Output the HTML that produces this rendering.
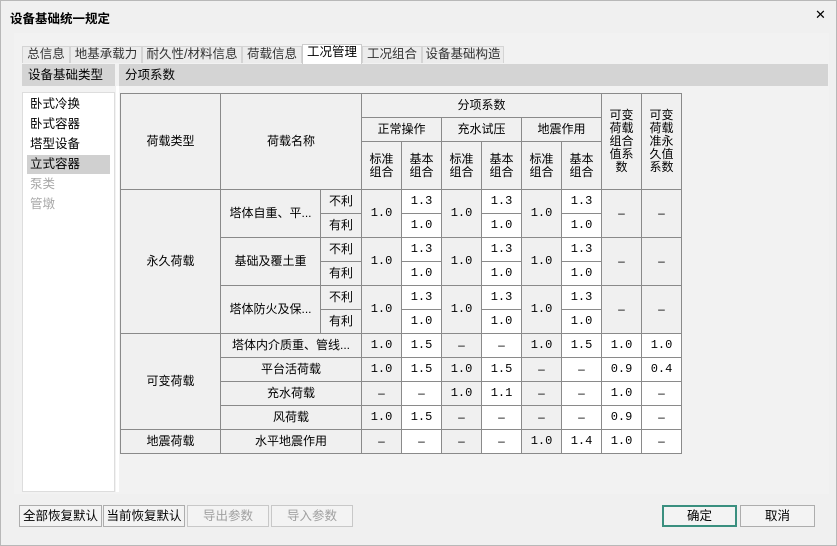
<!DOCTYPE html>
<html><head><meta charset="utf-8"><style>
*{margin:0;padding:0;box-sizing:border-box}
body{width:837px;height:546px;overflow:hidden;background:#f0f0f0;font-family:"Liberation Sans","Noto Sans CJK SC",sans-serif;font-size:12px;color:#000;position:relative}
.a{position:absolute}
#win{left:0;top:0;width:837px;height:546px;border:1px solid #b8b8b8}
.title{left:10px;top:8px;font-size:12.5px;font-weight:bold}
.close{left:815px;top:7px;font-size:13px}
.frame{left:14px;top:33px;width:815px;height:461px;background:#f2f2f2}
.tab{top:46px;height:17px;border:1px solid #d4d4d4;border-bottom:none;background:#ececec;color:#333;text-align:center;line-height:15px;font-size:12.5px}
.tab.act{top:44px;height:20px;background:#fff;border-color:#ccc;color:#000}
.hd{top:64px;height:22px;background:#d4d4d4;line-height:22px;padding-left:6px;font-size:12.5px}
.list{left:22px;top:92px;width:93px;height:400px;background:#fff;border:1px solid #ddd}
.li{left:27px;width:83px;height:19px;line-height:19px;padding-left:3px;font-size:12.5px}
table{position:absolute;left:120px;top:93px;border-collapse:collapse;table-layout:fixed}
td{border:1px solid #8a8a8a;text-align:center;vertical-align:middle;background:#f0f0f0;height:24px;padding:0;font-size:12px;line-height:13px;overflow:hidden;white-space:nowrap}
td.w{background:#fff}
.n{font-family:"Liberation Mono",monospace;font-size:12px}
.d{font-family:"Liberation Sans",sans-serif}
.btn{top:505px;height:22px;border:1px solid #adadad;background:#f3f3f3;text-align:center;line-height:20px;font-size:12.5px}
.dis{color:#a0a0a0;border-color:#c8c8c8}
</style></head><body>
<div id="win" class="a"></div>
<div class="a title">设备基础统一规定</div>
<div class="a close">✕</div>
<div class="a frame"></div>
<div class="a tab" style="left:22px;width:48px">总信息</div>
<div class="a tab" style="left:70px;width:72px">地基承载力</div>
<div class="a tab" style="left:142px;width:100px">耐久性/材料信息</div>
<div class="a tab" style="left:242px;width:60px">荷载信息</div>
<div class="a tab act" style="left:302px;width:60px">工况管理</div>
<div class="a tab" style="left:362px;width:60px">工况组合</div>
<div class="a tab" style="left:422px;width:82px">设备基础构造</div>
<div class="a hd" style="left:22px;width:93px">设备基础类型</div>
<div class="a hd" style="left:119px;width:709px">分项系数</div>
<div class="a list"></div>
<div class="a li" style="top:95px">卧式冷换</div>
<div class="a li" style="top:115px">卧式容器</div>
<div class="a li" style="top:135px">塔型设备</div>
<div class="a li" style="top:155px;background:#d0d0d0">立式容器</div>
<div class="a li" style="top:175px;color:#a8a8a8">泵类</div>
<div class="a li" style="top:195px;color:#a8a8a8">管墩</div>
<div class="a" style="left:116px;top:86px;width:3px;height:406px;background:#fff"></div>
<table>
<colgroup><col style="width:100px"><col style="width:100px"><col style="width:41px"><col style="width:40px"><col style="width:40px"><col style="width:40px"><col style="width:40px"><col style="width:40px"><col style="width:40px"><col style="width:40px"><col style="width:40px"></colgroup>
<tr><td rowspan="3">荷载类型</td><td rowspan="3" colspan="2">荷载名称</td><td colspan="6">分项系数</td><td rowspan="3">可变<br>荷载<br>组合<br>值系<br>数</td><td rowspan="3">可变<br>荷载<br>准永<br>久值<br>系数</td></tr>
<tr><td colspan="2">正常操作</td><td colspan="2">充水试压</td><td colspan="2">地震作用</td></tr>
<tr><td style="height:48px">标准<br>组合</td><td>基本<br>组合</td><td>标准<br>组合</td><td>基本<br>组合</td><td>标准<br>组合</td><td>基本<br>组合</td></tr>
<tr><td rowspan="6">永久荷载</td><td rowspan="2">塔体自重、平...</td><td>不利</td><td rowspan="2" class="n">1.0</td><td class="w n">1.3</td><td rowspan="2" class="n">1.0</td><td class="w n">1.3</td><td rowspan="2" class="n">1.0</td><td class="w n">1.3</td><td rowspan="2" class="d">–</td><td rowspan="2" class="d">–</td></tr>
<tr><td>有利</td><td class="w n">1.0</td><td class="w n">1.0</td><td class="w n">1.0</td></tr>
<tr><td rowspan="2">基础及覆土重</td><td>不利</td><td rowspan="2" class="n">1.0</td><td class="w n">1.3</td><td rowspan="2" class="n">1.0</td><td class="w n">1.3</td><td rowspan="2" class="n">1.0</td><td class="w n">1.3</td><td rowspan="2" class="d">–</td><td rowspan="2" class="d">–</td></tr>
<tr><td>有利</td><td class="w n">1.0</td><td class="w n">1.0</td><td class="w n">1.0</td></tr>
<tr><td rowspan="2">塔体防火及保...</td><td>不利</td><td rowspan="2" class="n">1.0</td><td class="w n">1.3</td><td rowspan="2" class="n">1.0</td><td class="w n">1.3</td><td rowspan="2" class="n">1.0</td><td class="w n">1.3</td><td rowspan="2" class="d">–</td><td rowspan="2" class="d">–</td></tr>
<tr><td>有利</td><td class="w n">1.0</td><td class="w n">1.0</td><td class="w n">1.0</td></tr>
<tr><td rowspan="4">可变荷载</td><td colspan="2">塔体内介质重、管线...</td><td class="n">1.0</td><td class="w n">1.5</td><td class="d">–</td><td class="w d">–</td><td class="n">1.0</td><td class="w n">1.5</td><td class="w n">1.0</td><td class="w n">1.0</td></tr>
<tr><td colspan="2">平台活荷载</td><td class="n">1.0</td><td class="w n">1.5</td><td class="n">1.0</td><td class="w n">1.5</td><td class="d">–</td><td class="w d">–</td><td class="w n">0.9</td><td class="w n">0.4</td></tr>
<tr><td colspan="2">充水荷载</td><td class="d">–</td><td class="w d">–</td><td class="n">1.0</td><td class="w n">1.1</td><td class="d">–</td><td class="w d">–</td><td class="w n">1.0</td><td class="w d">–</td></tr>
<tr><td colspan="2">风荷载</td><td class="n">1.0</td><td class="w n">1.5</td><td class="d">–</td><td class="w d">–</td><td class="d">–</td><td class="w d">–</td><td class="w n">0.9</td><td class="w d">–</td></tr>
<tr><td>地震荷载</td><td colspan="2">水平地震作用</td><td class="d">–</td><td class="w d">–</td><td class="d">–</td><td class="w d">–</td><td class="n">1.0</td><td class="w n">1.4</td><td class="w n">1.0</td><td class="w d">–</td></tr>
</table>
<div class="a btn" style="left:19px;width:83px">全部恢复默认</div>
<div class="a btn" style="left:103px;width:82px">当前恢复默认</div>
<div class="a btn dis" style="left:187px;width:82px">导出参数</div>
<div class="a btn dis" style="left:271px;width:82px">导入参数</div>
<div class="a btn" style="left:662px;width:75px;border:2px solid #3a8f7f;line-height:18px">确定</div>
<div class="a btn" style="left:740px;width:75px">取消</div>
</body></html>
